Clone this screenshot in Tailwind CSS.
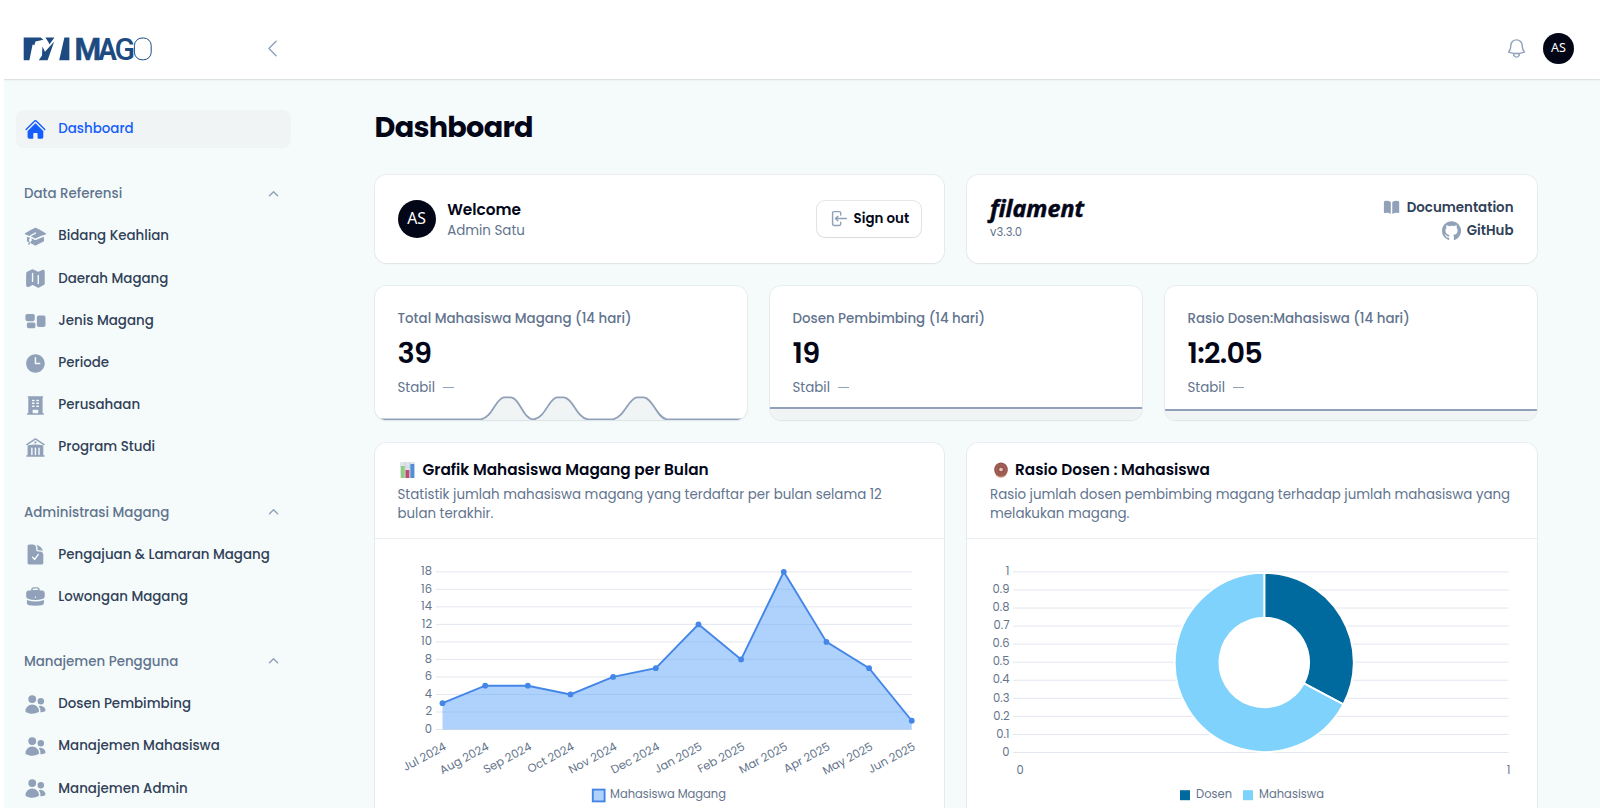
<!DOCTYPE html>
<html lang="id">
<head>
    <meta charset="UTF-8" />
    <meta name="viewport" content="width=device-width, initial-scale=1.0" />
    <title>Dashboard - MAGO</title>
    <script src="https://cdn.jsdelivr.net/npm/@tailwindcss/browser@4"></script>
</head>

<body class="bg-white font-[Poppins,Inter,sans-serif] text-slate-950 overflow-hidden">
<!-- Icons -->
<svg class="hidden">
    <symbol id="home" viewBox="0 0 24 24"><path d="M11.47 3.841a.75.75 0 0 1 1.06 0l8.69 8.69a.75.75 0 1 0 1.06-1.061l-8.689-8.69a2.25 2.25 0 0 0-3.182 0l-8.69 8.69a.75.75 0 1 0 1.061 1.06l8.69-8.689Z"/><path d="m12 5.432 8.159 8.159c.03.03.06.058.091.086v6.198c0 1.035-.84 1.875-1.875 1.875H15a.75.75 0 0 1-.75-.75v-4.5a.75.75 0 0 0-.75-.75h-3a.75.75 0 0 0-.75.75V21a.75.75 0 0 1-.75.75H5.625a1.875 1.875 0 0 1-1.875-1.875v-6.198a2.29 2.29 0 0 0 .091-.086L12 5.432Z"/></symbol>
    <symbol id="cap" viewBox="0 0 24 24"><path d="M11.7 2.805a.75.75 0 0 1 .6 0A60.65 60.65 0 0 1 22.83 8.72a.75.75 0 0 1-.231 1.337 49.948 49.948 0 0 0-9.902 3.912l-.003.002c-.114.06-.227.119-.34.18a.75.75 0 0 1-.707 0A50.88 50.88 0 0 0 7.5 12.173v-.224c0-.131.067-.248.172-.311a54.615 54.615 0 0 1 4.653-2.52.75.75 0 0 0-.65-1.352 56.123 56.123 0 0 0-4.78 2.589 1.858 1.858 0 0 0-.859 1.228 49.803 49.803 0 0 0-4.634-1.527.75.75 0 0 1-.231-1.337A60.653 60.653 0 0 1 11.7 2.805Z"/><path d="M13.06 15.473a48.45 48.45 0 0 1 7.666-3.282c.134 1.414.22 2.843.255 4.284a.75.75 0 0 1-.46.711 47.87 47.87 0 0 0-8.105 4.342.75.75 0 0 1-.832 0 47.87 47.87 0 0 0-8.104-4.342.75.75 0 0 1-.461-.71c.035-1.442.121-2.87.255-4.286.921.304 1.83.634 2.726.99v1.27a1.5 1.5 0 0 0-.14 2.508c-.09.38-.222.753-.397 1.11.452.213.901.434 1.346.66a6.727 6.727 0 0 0 .551-1.607 1.5 1.5 0 0 0 .14-2.67v-.645a48.549 48.549 0 0 1 3.44 1.667 2.25 2.25 0 0 0 2.12 0Z"/><path d="M4.462 19.462c.42-.419.753-.89 1-1.395.453.214.902.435 1.347.662a6.742 6.742 0 0 1-1.286 1.794.75.75 0 0 1-1.06-1.06Z"/></symbol>
    <symbol id="map" viewBox="0 0 24 24"><path fill-rule="evenodd" d="M8.161 2.58a1.875 1.875 0 0 1 1.678 0l4.993 2.498c.106.052.23.052.336 0l3.869-1.935A1.875 1.875 0 0 1 21.75 4.82v12.485c0 .71-.401 1.36-1.037 1.677l-4.875 2.437a1.875 1.875 0 0 1-1.676 0l-4.994-2.497a.375.375 0 0 0-.336 0l-3.868 1.935A1.875 1.875 0 0 1 2.25 19.18V6.695c0-.71.401-1.36 1.036-1.677l4.875-2.437ZM9 6a.75.75 0 0 1 .75.75V15a.75.75 0 0 1-1.5 0V6.75A.75.75 0 0 1 9 6Zm6.75 3a.75.75 0 0 0-1.5 0v8.25a.75.75 0 0 0 1.5 0V9Z"/></symbol>
    <symbol id="group" viewBox="0 0 24 24"><path d="M1.5 7.125c0-1.036.84-1.875 1.875-1.875h6c1.036 0 1.875.84 1.875 1.875v3.75c0 1.036-.84 1.875-1.875 1.875h-6A1.875 1.875 0 0 1 1.5 10.875v-3.75Zm12 1.5c0-1.036.84-1.875 1.875-1.875h5.25c1.035 0 1.875.84 1.875 1.875v8.25c0 1.035-.84 1.875-1.875 1.875h-5.25a1.875 1.875 0 0 1-1.875-1.875v-8.25ZM3 16.125c0-1.036.84-1.875 1.875-1.875h5.25c1.036 0 1.875.84 1.875 1.875v2.25c0 1.035-.84 1.875-1.875 1.875h-5.25A1.875 1.875 0 0 1 3 18.375v-2.25Z"/></symbol>
    <symbol id="clock" viewBox="0 0 24 24"><path fill-rule="evenodd" d="M12 2.25c-5.385 0-9.75 4.365-9.75 9.75s4.365 9.75 9.75 9.75 9.75-4.365 9.75-9.75S17.385 2.25 12 2.25ZM12.75 6a.75.75 0 0 0-1.5 0v6c0 .414.336.75.75.75h4.5a.75.75 0 0 0 0-1.5h-3.75V6Z"/></symbol>
    <symbol id="office" viewBox="0 0 24 24"><path fill-rule="evenodd" d="M4.5 2.25a.75.75 0 0 0 0 1.5v16.5h-.75a.75.75 0 0 0 0 1.5h16.5a.75.75 0 0 0 0-1.5h-.75V3.75a.75.75 0 0 0 0-1.5h-15ZM9 6a.75.75 0 0 0 0 1.5h1.5a.75.75 0 0 0 0-1.5H9Zm-.75 3.75A.75.75 0 0 1 9 9h1.5a.75.75 0 0 1 0 1.5H9a.75.75 0 0 1-.75-.75ZM9 12a.75.75 0 0 0 0 1.5h1.5a.75.75 0 0 0 0-1.5H9Zm3.75-5.25A.75.75 0 0 1 13.5 6H15a.75.75 0 0 1 0 1.5h-1.5a.75.75 0 0 1-.75-.75ZM13.5 9a.75.75 0 0 0 0 1.5H15A.75.75 0 0 0 15 9h-1.5Zm-.75 3.75a.75.75 0 0 1 .75-.75H15a.75.75 0 0 1 0 1.5h-1.5a.75.75 0 0 1-.75-.75ZM9 19.5v-2.25a.75.75 0 0 1 .75-.75h4.5a.75.75 0 0 1 .75.75v2.25a.75.75 0 0 1-.75.75h-4.5A.75.75 0 0 1 9 19.5Z"/></symbol>
    <symbol id="library" viewBox="0 0 24 24"><path d="M11.584 2.376a.75.75 0 0 1 .832 0l9 6a.75.75 0 1 1-.832 1.248L12 3.901 3.416 9.624a.75.75 0 0 1-.832-1.248l9-6Z"/><path fill-rule="evenodd" d="M20.25 10.332v9.918H21a.75.75 0 0 1 0 1.5H3a.75.75 0 0 1 0-1.5h.75v-9.918a.75.75 0 0 1 .634-.74A49.109 49.109 0 0 1 12 9c2.59 0 5.134.202 7.616.592a.75.75 0 0 1 .634.74Zm-7.5 2.418a.75.75 0 0 0-1.5 0v6.75a.75.75 0 0 0 1.5 0v-6.75Zm3-.75a.75.75 0 0 1 .75.75v6.75a.75.75 0 0 1-1.5 0v-6.75a.75.75 0 0 1 .75-.75ZM9 12.75a.75.75 0 0 0-1.5 0v6.75a.75.75 0 0 0 1.5 0v-6.75Z"/><path d="M12 7.875a1.125 1.125 0 1 0 0-2.25 1.125 1.125 0 0 0 0 2.25Z"/></symbol>
    <symbol id="doc" viewBox="0 0 24 24"><path fill-rule="evenodd" d="M9 1.5H5.625c-1.036 0-1.875.84-1.875 1.875v17.25c0 1.035.84 1.875 1.875 1.875h12.75c1.035 0 1.875-.84 1.875-1.875V12.75A3.75 3.75 0 0 0 16.5 9h-1.875a1.875 1.875 0 0 1-1.875-1.875V5.25A3.75 3.75 0 0 0 9 1.5Zm6.61 10.936a.75.75 0 1 0-1.22-.872l-3.236 4.53L9.53 14.47a.75.75 0 0 0-1.06 1.06l2.25 2.25a.75.75 0 0 0 1.14-.094l3.75-5.25Z"/><path d="M12.971 1.816A5.23 5.23 0 0 1 14.25 5.25v1.875c0 .207.168.375.375.375H16.5a5.23 5.23 0 0 1 3.434 1.279 9.768 9.768 0 0 0-6.963-6.963Z"/></symbol>
    <symbol id="briefcase" viewBox="0 0 24 24"><path fill-rule="evenodd" d="M7.5 5.25a3 3 0 0 1 3-3h3a3 3 0 0 1 3 3v.205c.933.085 1.857.197 2.774.334 1.454.218 2.476 1.483 2.476 2.917v3.033c0 1.211-.734 2.352-1.936 2.752A24.726 24.726 0 0 1 12 15.75c-2.73 0-5.357-.442-7.814-1.259-1.202-.4-1.936-1.541-1.936-2.752V8.706c0-1.434 1.022-2.7 2.476-2.917A48.814 48.814 0 0 1 7.5 5.455V5.25Zm7.5 0v.09a49.488 49.488 0 0 0-6 0v-.09a1.5 1.5 0 0 1 1.5-1.5h3a1.5 1.5 0 0 1 1.5 1.5Zm-3 8.25a.75.75 0 1 0 0-1.5.75.75 0 0 0 0 1.5Z"/><path d="M3 18.4v-2.796a4.3 4.3 0 0 0 .713.31A26.226 26.226 0 0 0 12 17.25c2.892 0 5.68-.468 8.287-1.335.252-.084.49-.189.713-.311V18.4c0 1.452-1.047 2.728-2.523 2.923-2.12.282-4.282.427-6.477.427a49.19 49.19 0 0 1-6.477-.427C4.047 21.128 3 19.852 3 18.4Z"/></symbol>
    <symbol id="users" viewBox="0 0 24 24"><path d="M4.5 6.375a4.125 4.125 0 1 1 8.25 0 4.125 4.125 0 0 1-8.25 0ZM14.25 8.625a3.375 3.375 0 1 1 6.75 0 3.375 3.375 0 0 1-6.75 0ZM1.5 19.125a7.125 7.125 0 0 1 14.25 0v.003l-.001.119a.75.75 0 0 1-.363.63 13.067 13.067 0 0 1-6.761 1.873c-2.472 0-4.786-.684-6.76-1.873a.75.75 0 0 1-.364-.63l-.001-.122ZM17.25 19.128l-.001.144a2.25 2.25 0 0 1-.233.96 10.088 10.088 0 0 0 5.06-1.01.75.75 0 0 0 .42-.643 4.875 4.875 0 0 0-6.957-4.611 8.586 8.586 0 0 1 1.71 5.157v.003Z"/></symbol>
    <symbol id="chevron-up" viewBox="0 0 20 20"><path fill-rule="evenodd" d="M9.47 6.47a.75.75 0 0 1 1.06 0l4.25 4.25a.75.75 0 1 1-1.06 1.06L10 8.06l-3.72 3.72a.75.75 0 0 1-1.06-1.06l4.25-4.25Z"/></symbol>
</svg>

<div class="h-[808px] ml-1 bg-[#f5fbfb] overflow-hidden">
    <!-- Topbar -->
    <header class="relative h-[78.5px] bg-white shadow-[0_1px_2px_rgba(15,23,42,0.08)] ring-1 ring-slate-950/5 flex items-center justify-between pt-[18.5px] pl-[19px] pr-[26px]">
        <div class="flex items-center gap-[108px]">
            <svg class="w-[130px] h-[26px] fill-[#1d4b81] overflow-visible" viewBox="23 36 130 26">
                <path d="M23.7 37.6H40.6L43.4 39.8L35.4 41.6L34.4 45.2L32.6 44.6L29.4 60.2H23.7Z"/>
                <path d="M45.4 37.6H54.4L49.4 44.6L48.6 42.6Z"/>
                <path d="M42.4 46.4L45 51.8L54.2 41.4L47.6 60.2H38.8L42 55.4Z"/>
                <path d="M64.4 37.6H69.4V60.2H59.2Z"/>
                <text x="74.4" y="60.2" textLength="26.6" lengthAdjust="spacingAndGlyphs" stroke="#1d4b81" stroke-width=".5" class="font-[Roboto] font-bold text-[31.4px] leading-none">M</text>
                <text x="98.2" y="60.2" textLength="18.6" lengthAdjust="spacingAndGlyphs" class="font-[Roboto] font-bold text-[31.4px] leading-none">A</text>
                <text x="114.4" y="60.2" textLength="20.6" lengthAdjust="spacingAndGlyphs" class="font-[Roboto] font-medium text-[31.4px] leading-none">G</text>
                <rect x="134.4" y="38" width="16.8" height="21.8" rx="7.6" fill="none" stroke="#1d4b81" stroke-width="1"/>
            </svg>
            <svg class="w-[23px] h-[23px] stroke-slate-400 fill-none" viewBox="0 0 24 24" stroke-width="1.5" stroke-linecap="round" stroke-linejoin="round"><path d="M15.75 19.5 8.25 12l7.5-7.5"/></svg>
        </div>
        <div class="flex items-center gap-[15px]">
            <svg class="w-[23px] h-[23px] stroke-slate-400 fill-none" viewBox="0 0 24 24" stroke-width="1.5" stroke-linecap="round" stroke-linejoin="round"><path d="M14.857 17.082a23.848 23.848 0 0 0 5.454-1.31A8.967 8.967 0 0 1 18 9.75V9A6 6 0 0 0 6 9v.75a8.967 8.967 0 0 1-2.312 6.022c1.733.64 3.56 1.085 5.455 1.31m5.714 0a24.255 24.255 0 0 1-5.714 0m5.714 0a3 3 0 1 1-5.714 0"/></svg>
            <div class="size-[31px] rounded-full bg-[#020617] text-white font-['Noto_Sans'] text-[12.5px] flex items-center justify-center">AS</div>
        </div>
    </header>

    <div class="flex">
        <!-- Sidebar -->
        <nav class="w-[300px] shrink-0 pl-[12.3px] pr-[13px] pt-[31.7px] flex flex-col gap-[26.9px] text-[13.4px] font-medium text-slate-700">
            <a class="h-[38.2px] rounded-lg bg-[#f0f4f5] flex items-center gap-[11.5px] px-[7.6px] text-blue-600"><svg class="size-[22.9px] fill-blue-600"><use href="#home"/></svg>Dashboard</a>

            <div class="flex flex-col gap-1">
                <div class="h-[38.2px] flex items-center justify-between px-[7.6px] text-slate-500">Data Referensi<svg class="size-[19.1px] fill-slate-400"><use href="#chevron-up"/></svg></div>
                <a class="h-[38.2px] flex items-center gap-[11.5px] px-[7.6px]"><svg class="size-[22.9px] fill-slate-400"><use href="#cap"/></svg>Bidang Keahlian</a>
                <a class="h-[38.2px] flex items-center gap-[11.5px] px-[7.6px]"><svg class="size-[22.9px] fill-slate-400"><use href="#map"/></svg>Daerah Magang</a>
                <a class="h-[38.2px] flex items-center gap-[11.5px] px-[7.6px]"><svg class="size-[22.9px] fill-slate-400"><use href="#group"/></svg>Jenis Magang</a>
                <a class="h-[38.2px] flex items-center gap-[11.5px] px-[7.6px]"><svg class="size-[22.9px] fill-slate-400"><use href="#clock"/></svg>Periode</a>
                <a class="h-[38.2px] flex items-center gap-[11.5px] px-[7.6px]"><svg class="size-[22.9px] fill-slate-400"><use href="#office"/></svg>Perusahaan</a>
                <a class="h-[38.2px] flex items-center gap-[11.5px] px-[7.6px]"><svg class="size-[22.9px] fill-slate-400"><use href="#library"/></svg>Program Studi</a>
            </div>

            <div class="flex flex-col gap-1">
                <div class="h-[38.2px] flex items-center justify-between px-[7.6px] text-slate-500">Administrasi Magang<svg class="size-[19.1px] fill-slate-400"><use href="#chevron-up"/></svg></div>
                <a class="h-[38.2px] flex items-center gap-[11.5px] px-[7.6px]"><svg class="size-[22.9px] fill-slate-400"><use href="#doc"/></svg>Pengajuan &amp; Lamaran Magang</a>
                <a class="h-[38.2px] flex items-center gap-[11.5px] px-[7.6px]"><svg class="size-[22.9px] fill-slate-400"><use href="#briefcase"/></svg>Lowongan Magang</a>
            </div>

            <div class="flex flex-col gap-1">
                <div class="h-[38.2px] flex items-center justify-between px-[7.6px] text-slate-500">Manajemen Pengguna<svg class="size-[19.1px] fill-slate-400"><use href="#chevron-up"/></svg></div>
                <a class="h-[38.2px] flex items-center gap-[11.5px] px-[7.6px]"><svg class="size-[22.9px] fill-slate-400"><use href="#users"/></svg>Dosen Pembimbing</a>
                <a class="h-[38.2px] flex items-center gap-[11.5px] px-[7.6px]"><svg class="size-[22.9px] fill-slate-400"><use href="#users"/></svg>Manajemen Mahasiswa</a>
                <a class="h-[38.2px] flex items-center gap-[11.5px] px-[7.6px]"><svg class="size-[22.9px] fill-slate-400"><use href="#users"/></svg>Manajemen Admin</a>
            </div>
        </nav>

        <!-- Content -->
        <main class="w-[1162px] ml-[70.5px] pt-[29.5px] shrink-0">
            <h1 class="text-[28.7px] leading-[38px] font-bold tracking-tight">Dashboard</h1>

            <div class="mt-[29px] grid grid-cols-2 gap-[23px]">
                <section class="h-[88px] rounded-[11.5px] bg-white shadow-[0_1px_2px_rgba(15,23,42,0.05)] ring-1 ring-slate-950/5 px-[23px] flex items-center gap-[11.5px]">
                    <div class="size-[38.2px] rounded-full bg-[#020617] text-white font-['Noto_Sans'] text-[15.8px] flex items-center justify-center">AS</div>
                    <div class="flex-1">
                        <h2 class="text-[15.3px] leading-[22px] font-semibold">Welcome</h2>
                        <p class="text-[13.4px] leading-[19px] text-slate-500">Admin Satu</p>
                    </div>
                    <button class="h-[36px] w-[104px] rounded-lg bg-white shadow-[0_1px_2px_rgba(15,23,42,0.05)] ring-1 ring-slate-950/10 flex items-center justify-center gap-[5.5px] text-[13.4px] font-semibold">
                        <svg class="size-[19.1px] fill-slate-400" viewBox="0 0 20 20"><path d="M3 4.25A2.25 2.25 0 0 1 5.25 2h5.5A2.25 2.25 0 0 1 13 4.25v2a.75.75 0 0 1-1.5 0v-2a.75.75 0 0 0-.75-.75h-5.5a.75.75 0 0 0-.75.75v11.5c0 .414.336.75.75.75h5.5a.75.75 0 0 0 .75-.75v-2a.75.75 0 0 1 1.5 0v2A2.25 2.25 0 0 1 10.75 18h-5.5A2.25 2.25 0 0 1 3 15.75V4.25Z"/><path d="M19 10a.75.75 0 0 0-.75-.75H8.704l1.048-.943a.75.75 0 1 0-1.004-1.114l-2.5 2.25a.75.75 0 0 0 0 1.114l2.5 2.25a.75.75 0 1 0 1.004-1.114l-1.048-.943h9.546A.75.75 0 0 0 19 10Z"/></svg>
                        Sign out
                    </button>
                </section>

                <section class="h-[88px] rounded-[11.5px] bg-white shadow-[0_1px_2px_rgba(15,23,42,0.05)] ring-1 ring-slate-950/5 px-[23px] flex items-center justify-between">
                    <div>
                        <svg class="w-[96px] h-[22px] fill-slate-950 overflow-visible" viewBox="0 0 96 22"><text x="0" y="19" textLength="94" lengthAdjust="spacingAndGlyphs" stroke="#020617" stroke-width=".5" class="font-['Noto_Sans'] font-bold italic text-[23.5px] leading-none">filament</text></svg>
                        <p class="mt-[5px] text-[11.5px] leading-[15px] text-slate-500">v3.3.0</p>
                    </div>
                    <div class="flex flex-col items-end gap-[4px] text-[13.4px] leading-[19px] font-semibold text-slate-700">
                        <a class="flex items-center gap-[6px]"><svg class="size-[19.1px] fill-slate-400" viewBox="0 0 20 20"><path d="M10.75 16.82A7.462 7.462 0 0 1 15 15.5c.71 0 1.396.098 2.046.282A.75.75 0 0 0 18 15.06v-11a.75.75 0 0 0-.546-.721A9.006 9.006 0 0 0 15 3a8.963 8.963 0 0 0-4.25 1.065V16.82ZM9.25 4.065A8.963 8.963 0 0 0 5 3c-.85 0-1.673.118-2.454.339A.75.75 0 0 0 2 4.06v11a.75.75 0 0 0 .954.721A7.506 7.506 0 0 1 5 15.5c1.579 0 3.042.487 4.25 1.32V4.065Z"/></svg>Documentation</a>
                        <a class="flex items-center gap-[6px]"><svg class="size-[19.1px] fill-slate-400" viewBox="0 0 98 96"><path d="M48.854 0C21.839 0 0 22 0 49.217c0 21.756 13.993 40.172 33.405 46.69 2.427.49 3.316-1.059 3.316-2.362 0-1.141-.08-5.052-.08-9.127-13.59 2.934-16.42-5.867-16.42-5.867-2.184-5.704-5.42-7.17-5.42-7.17-4.448-3.015.324-3.015.324-3.015 4.934.326 7.523 5.052 7.523 5.052 4.367 7.496 11.404 5.378 14.235 4.074.404-3.178 1.699-5.378 3.074-6.6-10.839-1.141-22.243-5.378-22.243-24.283 0-5.378 1.94-9.778 5.014-13.2-.485-1.222-2.184-6.275.486-13.038 0 0 4.125-1.304 13.426 5.052a46.97 46.97 0 0 1 12.214-1.63c4.125 0 8.33.571 12.213 1.63 9.302-6.356 13.427-5.052 13.427-5.052 2.67 6.763.97 11.816.485 13.038 3.155 3.422 5.015 7.822 5.015 13.2 0 18.905-11.404 23.06-22.324 24.283 1.78 1.548 3.316 4.481 3.316 9.126 0 6.6-.08 11.897-.08 13.526 0 1.304.89 2.853 3.316 2.364 19.412-6.52 33.405-24.935 33.405-46.691C97.707 22 75.788 0 48.854 0z"/></svg>GitHub</a>
                    </div>
                </section>
            </div>

            <!-- Stats -->
            <div class="mt-[22.5px] grid grid-cols-3 gap-[23px]">
                <section class="relative h-[134px] rounded-[11.5px] bg-white shadow-[0_1px_2px_rgba(15,23,42,0.05)] ring-1 ring-slate-950/5 overflow-hidden px-[23px] pt-[23px]">
                    <p class="text-[13.4px] leading-[19px] font-medium text-slate-500">Total Mahasiswa Magang (14 hari)</p>
                    <p class="mt-[7px] text-[28.7px] leading-[36px] font-semibold tracking-tight">39</p>
                    <p class="mt-[7px] text-[13.4px] leading-[19px] text-slate-500 flex items-center gap-[8px]">Stabil <span class="w-[11px] h-px mt-px bg-slate-400"></span></p>
                    <svg class="absolute left-0 bottom-0 w-full h-[24px] fill-[#f0f4f5] stroke-slate-400" viewBox="0 0 372.3 24" preserveAspectRatio="none"><path stroke-width="1.8" d="M-2 23.3H106C117 22 121 2 129 1.4H136C145 2 148 23 158.5 23.3C170 23 174 2 182 1.4H189C198 2 202 22 213 23.3H238C249 22 254 2 262 1.4H269C278 2 282 22 292 23.3H375V30H-2Z"/></svg>
                </section>
                <section class="relative h-[134px] rounded-[11.5px] bg-white shadow-[0_1px_2px_rgba(15,23,42,0.05)] ring-1 ring-slate-950/5 overflow-hidden px-[23px] pt-[23px]">
                    <p class="text-[13.4px] leading-[19px] font-medium text-slate-500">Dosen Pembimbing (14 hari)</p>
                    <p class="mt-[7px] text-[28.7px] leading-[36px] font-semibold tracking-tight">19</p>
                    <p class="mt-[7px] text-[13.4px] leading-[19px] text-slate-500 flex items-center gap-[8px]">Stabil <span class="w-[11px] h-px mt-px bg-slate-400"></span></p>
                    <div class="absolute inset-x-0 bottom-0 h-[13px] bg-[#f0f4f5] border-t-2 border-slate-400"></div>
                </section>
                <section class="relative h-[134px] rounded-[11.5px] bg-white shadow-[0_1px_2px_rgba(15,23,42,0.05)] ring-1 ring-slate-950/5 overflow-hidden px-[23px] pt-[23px]">
                    <p class="text-[13.4px] leading-[19px] font-medium text-slate-500">Rasio Dosen:Mahasiswa (14 hari)</p>
                    <p class="mt-[7px] text-[28.7px] leading-[36px] font-semibold tracking-tight">1:2.05</p>
                    <p class="mt-[7px] text-[13.4px] leading-[19px] text-slate-500 flex items-center gap-[8px]">Stabil <span class="w-[11px] h-px mt-px bg-slate-400"></span></p>
                    <div class="absolute inset-x-0 bottom-0 h-[11px] bg-[#f0f4f5] border-t-2 border-slate-400"></div>
                </section>
            </div>

            <!-- Charts -->
            <div class="mt-[23px] grid grid-cols-2 gap-[23px]">
                <section class="h-[400px] rounded-[11.5px] bg-white shadow-[0_1px_2px_rgba(15,23,42,0.05)] ring-1 ring-slate-950/5">
                    <div class="h-[96.5px] px-[23px] pt-[15.5px] border-b border-[#e8edf2]">
                        <h3 class="flex items-center text-[15.3px] leading-[23px] font-semibold">
                            <svg class="w-[15px] h-[16px] ml-[2.5px] mr-[7.5px]" viewBox="0 0 15 16"><rect width="15" height="16" rx="1" fill="#dfe3ea"/><path d="M5 0v16M10 0v16M0 5h15M0 10h15" stroke="#c3c9d4" stroke-width=".6"/><rect x="1" y="4" width="3.6" height="12" fill="#8fce7e"/><rect x="5.5" y="8" width="3.8" height="8" fill="#c24a70"/><rect x="10.4" y="2" width="3.8" height="14" fill="#4f8fd8"/></svg>
                            Grafik Mahasiswa Magang per Bulan
                        </h3>
                        <p class="mt-[3.8px] text-[13.4px] leading-[19.1px] text-slate-500">Statistik jumlah mahasiswa magang yang terdaftar per bulan selama 12<br>bulan terakhir.</p>
                    </div>
                    <svg id="areaChart" class="w-full h-[280px] text-[11.5px]" viewBox="374.5 538.8 569.5 280"></svg>
                </section>
                <section class="h-[400px] rounded-[11.5px] bg-white shadow-[0_1px_2px_rgba(15,23,42,0.05)] ring-1 ring-slate-950/5">
                    <div class="h-[96.5px] px-[23px] pt-[15.5px] border-b border-[#e8edf2]">
                        <h3 class="flex items-center text-[15.3px] leading-[23px] font-semibold">
                            <svg class="w-[14px] h-[16px] ml-[3.5px] mr-[7.5px]" viewBox="0 0 14 16"><ellipse cx="7" cy="8.5" rx="6.7" ry="7.3" fill="#d39a7c"/><ellipse cx="7" cy="7.5" rx="6.7" ry="7" fill="#985850"/><ellipse cx="7" cy="7.5" rx="4.6" ry="4.8" fill="none" stroke="#a8685f" stroke-width="1"/><circle cx="7" cy="7.5" r="1.8" fill="#e8c9b8"/></svg>
                            Rasio Dosen : Mahasiswa
                        </h3>
                        <p class="mt-[3.8px] text-[13.4px] leading-[19.1px] text-slate-500">Rasio jumlah dosen pembimbing magang terhadap jumlah mahasiswa yang<br>melakukan magang.</p>
                    </div>
                    <svg id="ratioChart" class="w-full h-[280px] text-[11.5px]" viewBox="967 538.8 569.5 280"></svg>
                </section>
            </div>
        </main>
    </div>
</div>

<script>
    const line = (x1, x2, y) => `<path d="M${x1} ${y}H${x2}" stroke="#e2e6ee" fill="none"/>`;
    const label = (x, y, anchor, text, extra = "") => `<text x="${x}" y="${y}" text-anchor="${anchor}" fill="#64748b" ${extra}>${text}</text>`;

    // Mahasiswa per bulan
    const months = ["Jul 2024", "Aug 2024", "Sep 2024", "Oct 2024", "Nov 2024", "Dec 2024", "Jan 2025", "Feb 2025", "Mar 2025", "Apr 2025", "May 2025", "Jun 2025"];
    const values = [3, 5, 5, 4, 6, 7, 12, 8, 18, 10, 7, 1];
    const px = i => 442 + i * 42.66;
    const py = v => 729.3 - v * 8.76;
    const points = values.map((v, i) => `${px(i)},${py(v)}`).join(" ");
    let area = "";
    for (let v = 0; v <= 18; v += 2) {
        area += line(435.5, 911.5, py(v)) + label(431.5, py(v) + 3.2, "end", v);
    }
    area += `<polygon points="${px(0)},${py(0)} ${points} ${px(11)},${py(0)}" fill="#60a5fa" fill-opacity=".5"/>`;
    area += `<polyline points="${points}" fill="none" stroke="#4486e8" stroke-width="1.9"/>`;
    values.forEach((v, i) => {
        area += `<circle cx="${px(i)}" cy="${py(v)}" r="2.9" fill="#4486e8"/>`;
        area += label(px(i) + 4.5, 749, "end", months[i], `transform="rotate(-28 ${px(i) + 4.5} 749)"`);
    });
    area += `<rect x="592.3" y="789.4" width="11.8" height="11.8" fill="#afd2fc" stroke="#4486e8" stroke-width="1.9"/>`;
    area += label(609.5, 798, "start", "Mahasiswa Magang", `textLength="116"`);
    document.getElementById("areaChart").innerHTML = area;

    // Rasio dosen : mahasiswa
    let ratio = "";
    for (let i = 0; i <= 10; i++) {
        const y = 752.3 - i * 18.06;
        ratio += line(1013, 1508.5, y) + label(1009.5, y + 3.2, "end", i / 10);
    }
    const cx = 1264.3, cy = 662.2, r = 89.5, hole = 44.8;
    const angle = 19 / 58 * 2 * Math.PI;
    const at = (rad, a) => `${cx + rad * Math.sin(a)} ${cy - rad * Math.cos(a)}`;
    const slice = (a, b, big, fill) => `<path d="M${at(r, a)}A${r} ${r} 0 ${big} 1 ${at(r, b)}L${at(hole, b)}A${hole} ${hole} 0 ${big} 0 ${at(hole, a)}Z" fill="${fill}" stroke="#fff" stroke-width="1.9"/>`;
    ratio += `<circle cx="${cx}" cy="${cy}" r="60" fill="#fff"/>`;
    ratio += slice(0, angle, 0, "#006a9f") + slice(angle, 2 * Math.PI, 1, "#7ed2fc");
    ratio += label(1020, 773.5, "middle", 0) + label(1508.5, 773.5, "middle", 1);
    ratio += `<rect x="1180" y="790" width="10" height="10" fill="#006a9f"/>` + label(1196, 798, "start", "Dosen", `textLength="36"`);
    ratio += `<rect x="1243" y="790" width="10" height="10" fill="#7ed2fc"/>` + label(1259, 798, "start", "Mahasiswa", `textLength="65"`);
    document.getElementById("ratioChart").innerHTML = ratio;
</script>
</body>
</html>
